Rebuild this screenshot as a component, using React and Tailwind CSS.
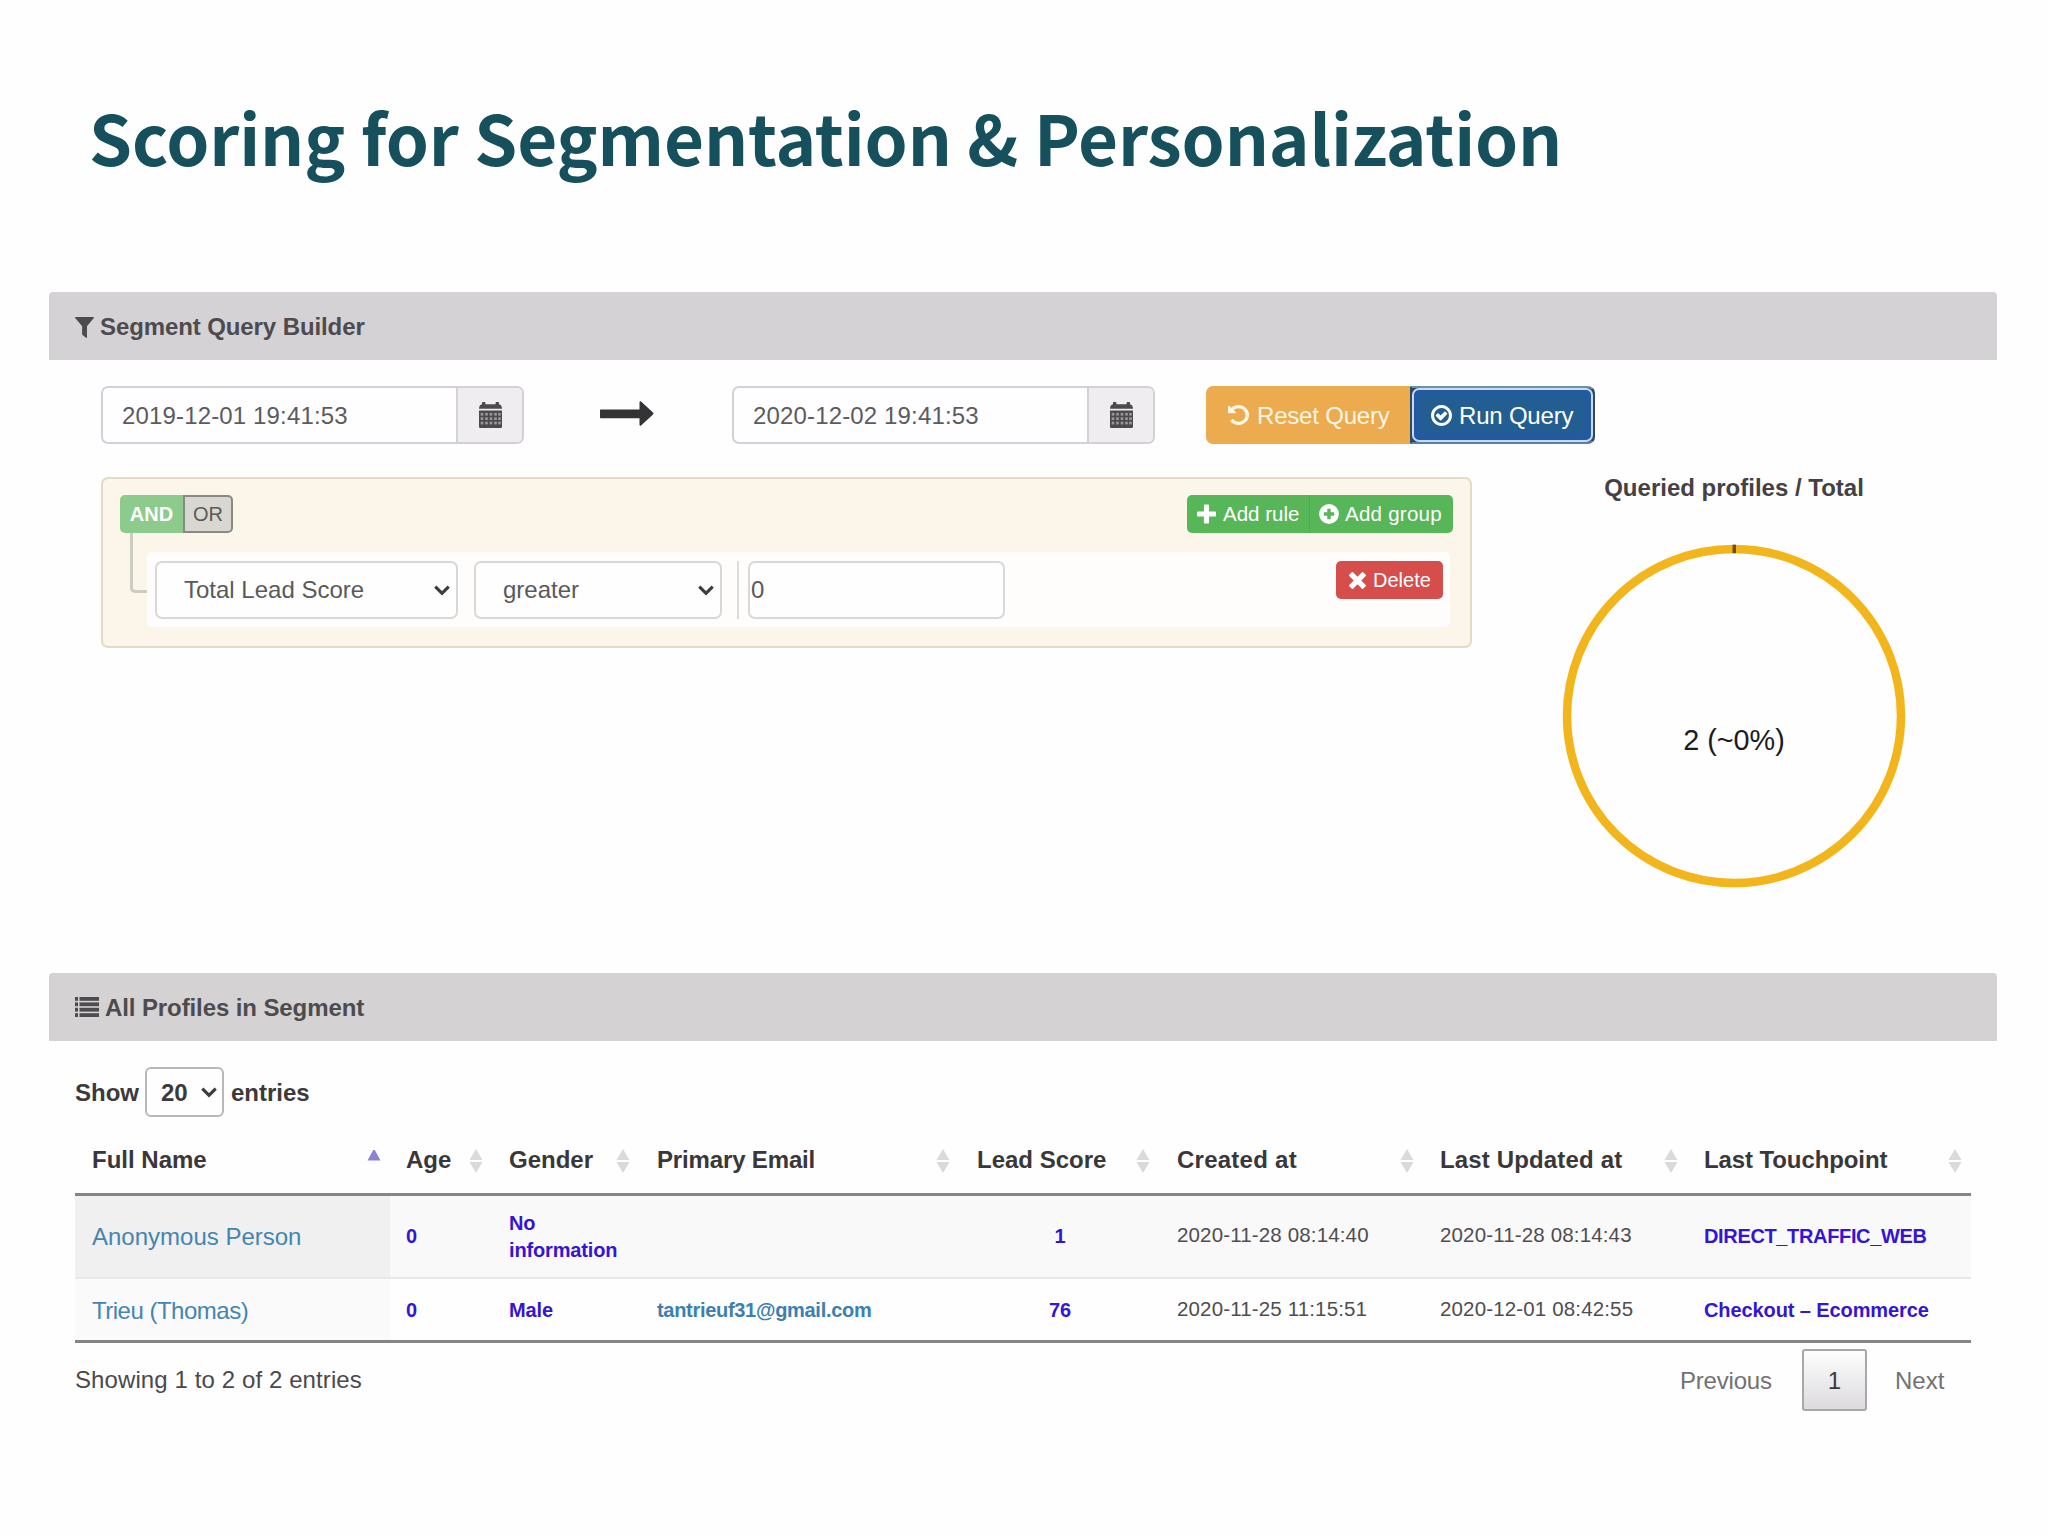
const SANS = "font-['Liberation_Sans',Arial,sans-serif]";

function Filter() {
  return (
    <svg viewBox="0 0 19 21" className="h-[21px] w-[19px]" fill="currentColor">
      <path d="M.6 0h17.800c.6 0 .8.600.4 1L12 9.200v11.200c0 .5-.5.700-.9.400l-3.600-2.900c-.3-.2-.4-.5-.4-.8V9.200L.2 1C-.2.600 0 0 .6 0z" />
    </svg>
  );
}

function ListIcon() {
  return (
    <svg viewBox="0 0 24 20" className="h-[20px] w-[24px]" fill="currentColor">
      {[0, 5.4, 10.8, 16.2].map((y) => (
        <g key={y}>
          <rect x="0" y={y} width="3" height="3.800" />
          <rect x="4.500" y={y} width="19.500" height="3.800" />
        </g>
      ))}
    </svg>
  );
}

function Calendar() {
  const rows = [12.2, 16.6, 21];
  const cols = [2.1, 6.6, 11.1, 15.6, 19.6];
  return (
    <svg viewBox="0 0 23 26" className="h-[26px] w-[23px]">
      <path
        d="M0 6.800C0 4 1.300 2.400 3 2.200V1c0-.6.400-1 1-1h1.400c.6 0 1 .400 1 1v1.200h10.200V1c0-.6.400-1 1-1H19c.6 0 1 .400 1 1v1.200c1.700.200 3 1.800 3 4.600z"
        fill="#4c4a4d"
      />
      <path d="M0 8.600h23v15.800c0 .9-.7 1.600-1.600 1.600H1.600C.7 26 0 25.300 0 24.400z" fill="#4c4a4d" />
      {rows.map((y) =>
        cols.map((x) => (
          <rect key={`${x}-${y}`} x={x - 0.4} y={y - 1.3} width="2.600" height="2.700" fill="#9a989b" />
        ))
      )}
    </svg>
  );
}

function Undo() {
  return (
    <svg viewBox="0 128 1536 1536" className="h-[20px] w-[21px]" preserveAspectRatio="none" fill="currentColor">
      <path d="M1536 896q0 156-61 298t-164 245-245 164-298 61q-172 0-327-72.500t-264-204.500q-7-10-6.500-22.500t8.500-20.500l137-138q10-9 25-9 16 2 23 12 73 95 179 147t225 52q104 0 198.500-40.500t163.500-109.500 109.500-163.500 40.500-198.500-40.500-198.500-109.500-163.500-163.500-109.500-198.500-40.500q-98 0-188 35.500t-160 101.500l137 138q31 30 14 69-17 40-59 40h-448q-26 0-45-19t-19-45v-448q0-42 40-59 39-17 69 14l130 129q107-101 244.500-156.500t284.500-55.500q156 0 298 61t245 164 164 245 61 298z" />
    </svg>
  );
}

function CheckCircle() {
  return (
    <svg viewBox="128 128 1536 1536" className="size-[21px]" fill="currentColor">
      <path d="M1299 813l-422 422q-19 19-45 19t-45-19l-294-294q-19-19-19-45t19-45l102-102q19-19 45-19t45 19l147 147 275-275q19-19 45-19t45 19l102 102q19 19 19 45t-19 45zm141 83q0-148-73-273t-198-198-273-73-273 73-198 198-73 273 73 273 198 198 273 73 273-73 198-198 73-273zm224 0q0 209-103 385.500t-279.500 279.500-385.500 103-385.500-103-279.500-279.500-103-385.500 103-385.500 279.500-279.500 385.500-103 385.500 103 279.500 279.500 103 385.500z" />
    </svg>
  );
}

function Plus() {
  return (
    <svg viewBox="0 0 19 19" className="h-[20px] w-[19px]" fill="currentColor">
      <path d="M7.800 0h3.400c.5 0 .9.400.9.900v6h6c.5 0 .9.400.9.900v3.400c0 .5-.4.900-.9.900h-6v6c0 .5-.4.900-.9.900H7.800c-.5 0-.9-.4-.9-.9v-6h-6c-.5 0-.9-.4-.9-.9V7.800c0-.5.400-.9.900-.9h6v-6c0-.5.400-.9.900-.9z" />
    </svg>
  );
}

function PlusCircle() {
  return (
    <svg viewBox="0 0 20 20" className="size-[20px]">
      <circle cx="10" cy="10" r="9.900" fill="currentColor" />
      <path d="M8.300 4.800h3.400v3.500h3.500v3.400h-3.500v3.500H8.300v-3.500H4.800V8.300h3.500z" fill="#57b657" />
    </svg>
  );
}

function Times() {
  return (
    <svg viewBox="0 0 18 18" className="h-[17px] w-[17px]" fill="currentColor">
      <path d="M4.300.300 9 5 13.700.300c.4-.4.900-.4 1.300 0l2.700 2.700c.4.400.4.900 0 1.300L13 9l4.700 4.700c.4.400.4.900 0 1.300L15 17.700c-.4.400-.9.400-1.300 0L9 13l-4.700 4.700c-.4.400-.9.400-1.300 0L.3 15c-.4-.4-.4-.9 0-1.300L5 9 .3 4.300c-.4-.4-.4-.9 0-1.300L3 .3c.4-.4.900-.4 1.300 0z" />
    </svg>
  );
}

function Chevron() {
  return (
    <svg viewBox="0 0 16 11" className="h-[11px] w-[16px] shrink-0" fill="none" stroke="#3c3c3e" strokeWidth="3.200">
      <path d="M1.300 1.600 8 8.300l6.700-6.700" />
    </svg>
  );
}

function Arrow() {
  return (
    <svg viewBox="0 0 54 25" className="h-[25px] w-[54px]" fill="#353336">
      <path d="M1 8.500h38.500V1.200c0-.9.900-1.300 1.600-.7L53 11.600c.6.600.6 1.200 0 1.800L41.100 24.500c-.7.600-1.600.200-1.600-.7v-6.600H1c-.6 0-1-.4-1-1V9.500c0-.6.400-1 1-1z" />
    </svg>
  );
}

function Sort({ active }) {
  if (active) {
    return (
      <svg viewBox="0 0 14 22" className="h-[22px] w-[14px]">
        <path d="M7 -1.500 13.500 10.500H.5z" fill="#8a84d8" />
      </svg>
    );
  }
  return (
    <svg viewBox="0 0 14 24" className="h-[24px] w-[14px]" fill="#dad9db">
      <path d="M7 0 13.500 11H.5z" />
      <path d="M7 24 13.500 13H.5z" />
    </svg>
  );
}

function PanelBar({ icon, children, className }) {
  return (
    <div className={`flex items-center rounded-t-[4px] pl-[26px] text-[#4d4b4e] ${className}`}>
      {icon}
      <h2 className="whitespace-nowrap pt-[2px] text-[24px] font-bold leading-none tracking-[-0.1px]">{children}</h2>
    </div>
  );
}

function DateInput({ value }) {
  return (
    <div className="flex h-[58px] w-[423px] shrink-0 overflow-hidden rounded-[7px] border-2 border-[#d3d1d5] bg-[#fefdff]">
      <div className="flex w-[355px] items-center whitespace-nowrap border-r-2 border-[#d3d1d5] pl-[19px] pt-[2px] text-[24px] leading-none tracking-[0.15px] text-[#5c5b5e]">
        {value}
      </div>
      <div className="flex flex-1 items-center justify-center bg-[#efedf0]">
        <Calendar />
      </div>
    </div>
  );
}

const SELECT = "flex h-[58px] items-center justify-between rounded-[7px] border-2 border-[#d9d8d9] bg-[#fefefe] text-[24px] leading-none text-[#5a595b]";

function QueryBuilder() {
  return (
    <div className="h-[171px] w-[1371px] rounded-[7px] border-2 border-[#e2dcc5] bg-[#fbf6e9] pl-[17px] pr-[17px] pt-[16px]">
      <div className="flex h-[38px] items-stretch justify-between text-[20.500px] leading-none">
        <div className="flex">
          <div className="flex w-[63px] items-center justify-center rounded-l-[5px] bg-[#8ccb8b] text-[20px] font-bold text-white">
            AND
          </div>
          <div className="flex w-[50px] items-center justify-center rounded-r-[5px] border-2 border-[#8b8984] bg-[#d9d7d1] text-[20px] text-[#5b5a58]">
            OR
          </div>
        </div>
        <div className="flex w-[266px] items-center overflow-hidden rounded-[5px] bg-[#57b657] text-white">
          <div className="flex h-full w-[123px] items-center gap-[7px] border-r border-[#4dab4d] pl-[10px]">
            <Plus />
            <span className="whitespace-nowrap">Add rule</span>
          </div>
          <div className="flex items-center gap-[6px] pl-[9px]">
            <PlusCircle />
            <span className="whitespace-nowrap tracking-[0.25px]">Add group</span>
          </div>
        </div>
      </div>
      <div className="flex">
        <div className="ml-[10px] h-[60px] w-[17px] rounded-bl-[5px] border-b-[3px] border-l-[3px] border-[#cdccc3]" />
        <div className="mt-[19px] flex h-[75px] w-[1303px] items-start rounded-[5px] bg-[#fefdfb] pl-[8px] pt-[9px]">
          <div className={`${SELECT} w-[303px] shrink-0 pl-[27px] pr-[6px]`}>
            <span className="whitespace-nowrap">Total Lead Score</span>
            <Chevron />
          </div>
          <div className={`${SELECT} ml-[16px] w-[248px] shrink-0 pl-[27px] pr-[6px]`}>
            <span>greater</span>
            <Chevron />
          </div>
          <div className="ml-[15px] h-[58px] w-[2px] shrink-0 bg-[#dddcdc]" />
          <div className={`${SELECT} ml-[9px] w-[257px] shrink-0 pl-[1px]`}>0</div>
          <div className="ml-[331px] flex h-[38px] w-[107px] shrink-0 items-center gap-[7px] rounded-[5px] bg-[#d64e4b] pl-[13px] text-[20px] leading-none text-white">
            <Times />
            <span>Delete</span>
          </div>
        </div>
      </div>
    </div>
  );
}

function Donut() {
  return (
    <div className="relative mt-[44px] size-[344px]">
      <svg viewBox="0 0 344 344" className="size-[344px]">
        <circle cx="172" cy="172" r="167" fill="none" stroke="#f2b51c" strokeWidth="8.500" />
        <rect x="170.500" y="0.700" width="3.500" height="8.500" fill="#6b5218" />
      </svg>
      <div className="absolute inset-x-0 top-[182px] text-center text-[28.800px] leading-[28px] text-[#1c1b1d]">2 (~0%)</div>
    </div>
  );
}

const COLUMNS = [
  { label: "Full Name", active: true, width: "w-[315px] pl-[17px] pr-[9px]" },
  { label: "Age", width: "w-[103px] pl-[16px] pr-[10px]" },
  { label: "Gender", width: "w-[147px] pl-[16px] pr-[10px]" },
  { label: "Primary Email", width: "w-[320px] pl-[17px] pr-[10px]", text: "tracking-[-0.15px]" },
  { label: "Lead Score", width: "w-[200px] pl-[17px] pr-[10px]" },
  { label: "Created at", width: "w-[264px] pl-[17px] pr-[10px]", text: "tracking-[0.25px]" },
  { label: "Last Updated at", width: "w-[263px] pl-[16px] pr-[9px]", text: "tracking-[0.15px]" },
  { label: "Last Touchpoint", width: "w-[284px] pl-[17px] pr-[9px]", text: "tracking-[-0.1px]" },
];

const ROWS = [
  {
    name: "Anonymous Person",
    age: "0",
    gender: "No information",
    email: "",
    score: "1",
    created: "2020-11-28 08:14:40",
    updated: "2020-11-28 08:14:43",
    touch: "DIRECT_TRAFFIC_WEB",
    row: "h-[83px] border-b-2 border-[#e9e7ea] bg-[#faf9fa]",
    cell: "",
    first: "bg-[#f0f0f0]",
    date: "pb-[4px]",
    touchStyle: "tracking-[-0.35px]",
  },
  {
    name: "Trieu (Thomas)",
    age: "0",
    gender: "Male",
    email: "tantrieuf31@gmail.com",
    score: "76",
    created: "2020-11-25 11:15:51",
    updated: "2020-12-01 08:42:55",
    touch: "Checkout – Ecommerce",
    row: "h-[61px]",
    cell: "pt-[2px]",
    first: "bg-[#fafafa] pt-[2px] tracking-[-0.5px]",
    date: "pb-[2px]",
    touchStyle: "tracking-[-0.1px]",
  },
];

function ProfileTable() {
  return (
    <div className="ml-[75px] w-[1896px]">
      <div className="flex h-[70px] border-b-[3px] border-[#868487]">
        {COLUMNS.map((c) => (
          <div key={c.label} className={`flex shrink-0 items-center justify-between ${c.width}`}>
            <span className={`whitespace-nowrap text-[24px] font-bold leading-none text-[#39373a] ${c.text || ""}`}>{c.label}</span>
            <span className="pt-[2px]">
              <Sort active={c.active} />
            </span>
          </div>
        ))}
      </div>
      <div className="border-b-[3px] border-[#868487]">
        {ROWS.map((r) => (
          <div key={r.name} className={`flex text-[20px] font-bold leading-[27px] text-[#3415d6] ${r.row}`}>
            <div className={`flex w-[315px] items-center pl-[17px] text-[24px] font-normal text-[#4585b1] ${r.first}`}>{r.name}</div>
            <div className={`flex w-[103px] items-center pl-[16px] ${r.cell}`}>{r.age}</div>
            <div className={`flex w-[147px] items-center pl-[16px] pr-[10px] tracking-[-0.150px] ${r.cell}`}>{r.gender}</div>
            <div className={`flex w-[320px] items-center pl-[17px] tracking-[-0.3px] text-[#3c7fb0] ${r.cell}`}>{r.email}</div>
            <div className={`flex w-[200px] items-center justify-center ${r.cell}`}>{r.score}</div>
            <div
              className={`flex w-[264px] items-center whitespace-nowrap pl-[17px] text-[20.500px] font-normal tracking-[0.150px] text-[#4f4d50] ${r.date}`}
            >
              {r.created}
            </div>
            <div
              className={`flex w-[263px] items-center whitespace-nowrap pl-[16px] text-[20.500px] font-normal tracking-[0.150px] text-[#4f4d50] ${r.date}`}
            >
              {r.updated}
            </div>
            <div className={`flex w-[284px] items-center whitespace-nowrap pl-[17px] ${r.cell} ${r.touchStyle}`}>{r.touch}</div>
          </div>
        ))}
      </div>
    </div>
  );
}

export default function App() {
  return (
    <div className={`h-[1536px] w-[2048px] overflow-hidden bg-[#fefefe] ${SANS}`}>
      <h1 className="ml-[89px] whitespace-nowrap pt-[96px] font-['Noto_Sans_CJK_SC','Source_Sans_Pro',sans-serif] text-[69px] font-bold leading-[80px] tracking-[-0.1px] text-[#15505c]">
        Scoring for Segmentation &amp; Personalization
      </h1>

      <section className="ml-[49px] mt-[116px] h-[681px] w-[1948px]">
        <PanelBar
          className="h-[68px] bg-[#d4d2d5]"
          icon={
            <span className="mr-[6px] pt-[2px]">
              <Filter />
            </span>
          }
        >
          Segment Query Builder
        </PanelBar>
        <div className="flex pl-[52px] pt-[26px]">
          <div className="w-[1371px]">
            <div className="flex h-[58px] items-center">
              <DateInput value="2019-12-01 19:41:53" />
              <div className="ml-[76px] mr-[78px] shrink-0 pb-[4px]">
                <Arrow />
              </div>
              <DateInput value="2020-12-02 19:41:53" />
              <div className="ml-[51px] flex h-[58px] shrink-0 text-[24px] leading-none text-white">
                <div className="flex w-[204px] items-center gap-[8px] rounded-l-[7px] bg-[#ecab4f] pl-[22px] text-[#fff6e6]">
                  <Undo />
                  <span className="whitespace-nowrap pt-[2px] tracking-[-0.2px]">Reset Query</span>
                </div>
                <div className="w-[185px] rounded-r-[7px] border-2 border-[#34495f] border-b-[#5f7fa0] border-t-[#6f929f] bg-[#24446b]">
                  <div className="flex h-full w-full items-center gap-[7px] rounded-[7px] border-2 border-[#c4dcf5] bg-[#235e93] pl-[17px] shadow-[inset_0_0_8px_2px_#2457b0]">
                    <CheckCircle />
                    <span className="whitespace-nowrap pt-[2px] tracking-[-0.2px]">Run Query</span>
                  </div>
                </div>
              </div>
            </div>
            <div className="pt-[33px]">
              <QueryBuilder />
            </div>
          </div>
          <div className="ml-[90px] flex w-[344px] flex-col items-center pt-[90px]">
            <div className="h-[24px] whitespace-nowrap text-[24px] font-bold leading-[24px] text-[#434144]">Queried profiles / Total</div>
            <Donut />
          </div>
        </div>
      </section>

      <section>
        <PanelBar
          className="ml-[49px] h-[68px] w-[1948px] bg-[#d4d2d3]"
          icon={
            <span className="mr-[6px]">
              <ListIcon />
            </span>
          }
        >
          All Profiles in Segment
        </PanelBar>
        <div className="ml-[75px] mt-[26px] flex h-[50px] items-center text-[24px] font-bold leading-none text-[#3b393c]">
          <span className="w-[70px] pt-[2px]">Show</span>
          <div className="flex h-[50px] w-[79px] items-center justify-between rounded-[6px] border-2 border-[#b9b7b9] bg-[#fefefe] pl-[14px] pr-[5px]">
            <span className="pt-[2px]">20</span>
            <Chevron />
          </div>
          <span className="ml-[7px] pt-[2px]">entries</span>
        </div>
        <div className="mt-[9px]">
          <ProfileTable />
        </div>
        <div className="ml-[75px] mt-[6px] flex h-[62px] w-[1896px] items-center justify-between text-[24px] leading-none text-[#4b494c]">
          <span className="whitespace-nowrap tracking-[0.1px]">Showing 1 to 2 of 2 entries</span>
          <div className="flex items-center pr-[28px] text-[#737174]">
            <span className="w-[122px] pt-[2px] tracking-[-0.2px]">Previous</span>
            <span className="flex h-[62px] w-[65px] items-center justify-center rounded-[3px] border-2 border-[#a9a7aa] bg-linear-to-b from-[#fefefe] to-[#dcdadd] pt-[2px] text-[#3b393c]">
              1
            </span>
            <span className="w-[76px] pl-[28px] pt-[2px]">Next</span>
          </div>
        </div>
      </section>
    </div>
  );
}
